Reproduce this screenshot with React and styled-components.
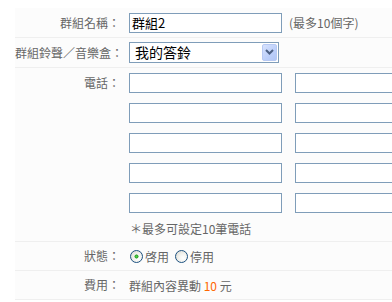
import styled, { createGlobalStyle } from "styled-components";

const GlobalStyle = createGlobalStyle`
  html, body {
    margin: 0;
    padding: 0;
    background: #fff;
    overflow: hidden;
  }
  body {
    font-family: "Noto Sans CJK TC", "Noto Sans CJK SC", "Liberation Sans", sans-serif;
    font-size: 12px;
    color: #666;
  }
`;

const Page = styled.div`
  padding: 8px 0 0 15px;
  width: 600px;
`;

const Form = styled.div`
  background: #fcfcfc;
`;

const Row = styled.div`
  display: grid;
  grid-template-columns: 105px 1fr;
  column-gap: 9px;
  align-items: ${(p) => (p.$top ? "start" : "center")};
  min-height: ${(p) => p.$h || 30}px;
  border-bottom: 1px solid #efefef;
  box-sizing: border-box;
  padding-top: ${(p) => (p.$top ? 5 : 0)}px;
`;

const Label = styled.div`
  text-align: right;
  line-height: ${(p) => (p.$top ? "20px" : "16px")};
  color: #666;
  white-space: nowrap;
`;

const Value = styled.div`
  display: flex;
  align-items: center;
  gap: 7px;
  white-space: nowrap;
`;

const TextInput = styled.input`
  box-sizing: border-box;
  width: 153px;
  height: 20px;
  border: 1px solid #7f9db9;
  background: #fff;
  padding: 0 2px;
  margin: 0;
  font-family: "Noto Sans CJK TC", "Liberation Sans", sans-serif;
  font-size: 13px;
  color: #000;
  outline: none;
`;

const Hint = styled.span`
  color: #666;
  font-size: 12px;
`;

const SelectBox = styled.div`
  box-sizing: border-box;
  width: 150px;
  height: 21px;
  border: 1px solid #7f9db9;
  background: #fff;
  display: flex;
  align-items: center;
  justify-content: space-between;
  padding: 0 0 1px 5px;
`;

const SelectValue = styled.span`
  font-size: 14px;
  color: #000;
  line-height: 18px;
`;

const SelectButton = styled.span`
  box-sizing: border-box;
  width: 15px;
  height: 17px;
  margin-right: 1px;
  border: 1px solid #b7c9f3;
  border-radius: 2px;
  background: linear-gradient(135deg, #d7e2fd 0%, #bccffa 60%, #b1c6f6 100%);
  display: flex;
  align-items: center;
  justify-content: center;
`;

const PhoneBlock = styled.div`
  display: flex;
  flex-direction: column;
`;

const PhoneGrid = styled.div`
  display: grid;
  grid-template-columns: 153px 153px;
  column-gap: 13px;
  row-gap: 10px;
`;

const Note = styled.div`
  margin-top: 8px;
  padding-left: 1px;
  line-height: 16px;
  color: #666;
`;

const RadioGroup = styled.div`
  display: flex;
  align-items: center;
`;

const RadioLabel = styled.label`
  display: flex;
  align-items: center;
  margin-right: 5px;
  color: #666;
`;

const Radio = styled.input.attrs({ type: "radio" })`
  appearance: none;
  box-sizing: border-box;
  width: 13px;
  height: 13px;
  margin: 0 2px 0 1px;
  border: 1px solid #1c5180;
  border-radius: 50%;
  background: radial-gradient(circle at 65% 65%, #ffffff 0%, #f2f2ee 45%, #d4d4cc 100%);
  &:checked {
    background:
      radial-gradient(circle at 50% 50%, #4fd047 0%, #2ea22a 22%, transparent 30%),
      radial-gradient(circle at 65% 65%, #ffffff 0%, #f2f2ee 45%, #d4d4cc 100%);
  }
`;

const Price = styled.span`
  color: #ff6600;
`;

function Chevron() {
  return (
    <svg width="9" height="6" viewBox="0 0 9 6">
      <path d="M1 1 L4.5 4.5 L8 1" stroke="#4d6185" strokeWidth="2" fill="none" />
    </svg>
  );
}

export default function App() {
  const phones = Array.from({ length: 10 });
  return (
    <>
      <GlobalStyle />
      <Page>
        <Form>
          <Row>
            <Label>群組名稱：</Label>
            <Value>
              <TextInput defaultValue="群組2" />
              <Hint>(最多10個字)</Hint>
            </Value>
          </Row>
          <Row>
            <Label>群組鈴聲／音樂盒：</Label>
            <Value>
              <SelectBox>
                <SelectValue>我的答鈴</SelectValue>
                <SelectButton>
                  <Chevron />
                </SelectButton>
              </SelectBox>
            </Value>
          </Row>
          <Row $top $h={174}>
            <Label $top>電話：</Label>
            <PhoneBlock>
              <PhoneGrid>
                {phones.map((_, i) => (
                  <TextInput key={i} />
                ))}
              </PhoneGrid>
              <Note>＊最多可設定10筆電話</Note>
            </PhoneBlock>
          </Row>
          <Row $h={29}>
            <Label>狀態：</Label>
            <RadioGroup>
              <RadioLabel>
                <Radio name="status" defaultChecked />
                啓用
              </RadioLabel>
              <RadioLabel>
                <Radio name="status" />
                停用
              </RadioLabel>
            </RadioGroup>
          </Row>
          <Row $h={29}>
            <Label>費用：</Label>
            <Value>
              <span>
                群組內容異動 <Price>10</Price> 元
              </span>
            </Value>
          </Row>
        </Form>
      </Page>
    </>
  );
}
